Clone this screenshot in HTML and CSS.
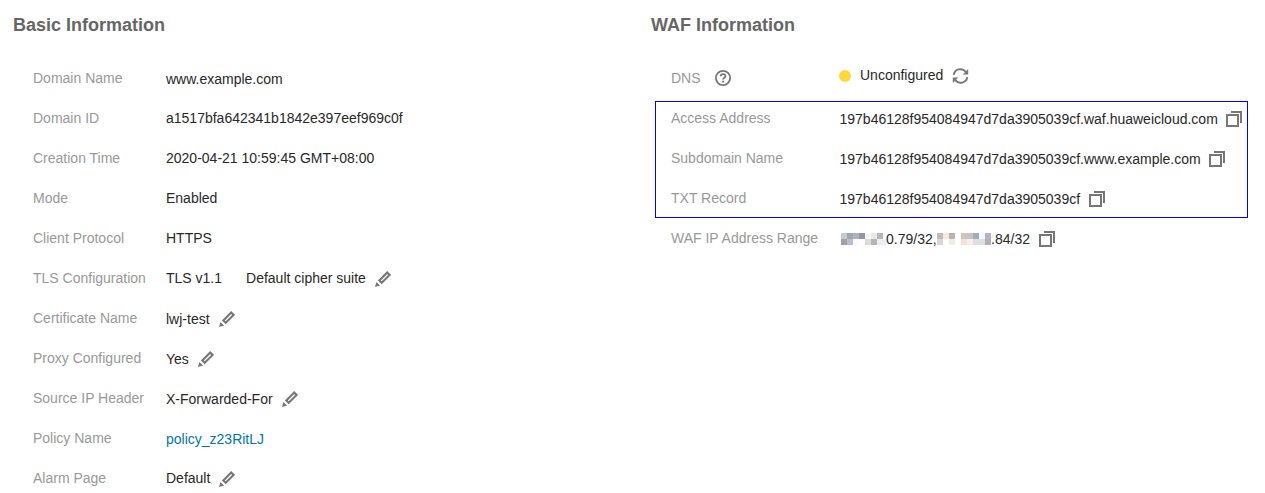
FILE: index.html
```html
<!DOCTYPE html>
<html lang="en">
<head>
<meta charset="utf-8">
<title>Domain Details</title>
<link rel="stylesheet" href="styles.css">
</head>
<body>
<svg class="defs" aria-hidden="true">
  <symbol id="pencil" viewBox="0 0 16 16"><path d="M4.3 9.4 12.2 1.5 14.6 3.9 6.7 11.8Z" fill="none" stroke="currentColor" stroke-width="2.1"/><path d="M1.4 10.9 5.1 14.6 0 16Z" fill="currentColor"/></symbol>
  <symbol id="copy" viewBox="0 0 16 16"><path d="M1 4h11v11H1ZM5 1h10v11" fill="none" stroke="currentColor" stroke-width="2"/></symbol>
</svg>
<main class="page">
  <section class="panel">
    <h2>Basic Information</h2>
    <dl class="list basic">
      <div class="row"><dt>Domain Name</dt><dd class="low">www.example.com</dd></div>
      <div class="row"><dt>Domain ID</dt><dd>a1517bfa642341b1842e397eef969c0f</dd></div>
      <div class="row"><dt>Creation Time</dt><dd>2020-04-21 10:59:45 GMT+08:00</dd></div>
      <div class="row"><dt>Mode</dt><dd>Enabled</dd></div>
      <div class="row"><dt>Client Protocol</dt><dd>HTTPS</dd></div>
      <div class="row"><dt>TLS Configuration</dt><dd><span class="version">TLS v1.1</span>Default cipher suite<svg class="icon drop"><use href="#pencil"/></svg></dd></div>
      <div class="row"><dt>Certificate Name</dt><dd class="low">lwj-test<svg class="icon"><use href="#pencil"/></svg></dd></div>
      <div class="row"><dt>Proxy Configured</dt><dd class="low">Yes<svg class="icon"><use href="#pencil"/></svg></dd></div>
      <div class="row"><dt>Source IP Header</dt><dd class="low">X-Forwarded-For<svg class="icon"><use href="#pencil"/></svg></dd></div>
      <div class="row"><dt>Policy Name</dt><dd class="low"><a class="link">policy_z23RitLJ</a></dd></div>
      <div class="row"><dt>Alarm Page</dt><dd>Default<svg class="icon drop"><use href="#pencil"/></svg></dd></div>
    </dl>
  </section>
  <section class="panel">
    <h2>WAF Information</h2>
    <dl class="list waf">
      <div class="row"><dt>DNS<svg class="help" viewBox="0 0 16 16"><circle cx="8" cy="8" r="7.1" fill="none" stroke="currentColor" stroke-width="1.8"/><path d="M5.7 6.3c0-3 4.7-3 4.7-.1 0 1.6-2.3 1.6-2.3 3.4M8.1 10.7v1.8" fill="none" stroke="currentColor" stroke-width="1.8"/></svg></dt><dd class="high"><span class="dot"></span>Unconfigured<svg class="icon refresh" viewBox="0 0 17 16"><path d="M1.7 6.8C2.7 1 10-.8 13.8 3.8M15.3 9.2C14.3 15 7 16.8 3.2 12.2" fill="none" stroke="currentColor" stroke-width="2"/><path d="M16.2 1v5.5h-5.5ZM.8 15V9.5h5.5Z" fill="currentColor"/></svg></dd></div>
      <div class="boxed">
        <div class="row"><dt>Access Address</dt><dd class="low">197b46128f954084947d7da3905039cf.waf.huaweicloud.com<svg class="icon"><use href="#copy"/></svg></dd></div>
        <div class="row"><dt>Subdomain Name</dt><dd class="low">197b46128f954084947d7da3905039cf.www.example.com<svg class="icon"><use href="#copy"/></svg></dd></div>
        <div class="row"><dt>TXT Record</dt><dd class="low">197b46128f954084947d7da3905039cf<svg class="icon"><use href="#copy"/></svg></dd></div>
      </div>
      <div class="row"><dt>WAF IP Address Range</dt><dd class="low">
        <svg class="mask first" viewBox="0 0 45 12" shape-rendering="crispEdges"><path fill="#c3cfcf" d="M0 0h6v6H0z"/><path fill="#9fa8af" d="M6 0h6v6H6z"/><path fill="#afb2bc" d="M12 0h6v6h-6z"/><path fill="#9296a7" d="M18 0h6v6h-6z"/><path fill="#f5fdfd" d="M24 0h6v6h-6z"/><path fill="#f0e5e2" d="M30 0h6v6h-6z"/><path fill="#b5b6be" d="M36 0h6v6h-6z"/><path fill="#a1a1a5" d="M0 6h6v6H0z"/><path fill="#b3bfd8" d="M6 6h6v6H6z"/><path fill="#fffaf3" d="M12 6h6v6h-6z"/><path fill="#dbdcdc" d="M24 6h6v6h-6z"/><path fill="#bab2b5" d="M30 6h6v6h-6z"/><path fill="#e4f1f7" d="M36 6h9v6h-9z"/></svg>0.79/32,<svg class="mask second" viewBox="0 0 54 12" shape-rendering="crispEdges"><path fill="#bdbbb8" d="M0 0h6v6H0z"/><path fill="#faead0" d="M6 0h6v6H6z"/><path fill="#bbb1b7" d="M12 0h6v6h-6z"/><path fill="#d2c2be" d="M24 0h6v6h-6z"/><path fill="#cac3bf" d="M30 0h6v6h-6z"/><path fill="#a3adb9" d="M36 0h6v6h-6z"/><path fill="#f4fdfd" d="M42 0h6v6h-6z"/><path fill="#b8b1cf" d="M48 0h6v6h-6z"/><path fill="#e1d6d6" d="M0 6h6v6H0z"/><path fill="#f0ede3" d="M12 6h6v6h-6z"/><path fill="#f4e2d7" d="M24 6h6v6h-6z"/><path fill="#faefe4" d="M30 6h6v6h-6z"/><path fill="#dedfe6" d="M36 6h12v6H36z"/><path fill="#b7afb6" d="M48 6h6v6h-6z"/></svg>.84/32<svg class="icon"><use href="#copy"/></svg></dd></div>
    </dl>
  </section>
</main>
</body>
</html>
```

FILE: styles.css
```css
body { margin: 0; background: #fff; color: #282828; font: 14px/20px "Liberation Sans", Arial, sans-serif; overflow: hidden; }
.defs { display: none; }
.page { display: grid; grid-template-columns: 638px 1fr; height: 493px; padding-left: 13px; box-sizing: border-box; overflow: hidden; }
h2 { margin: 13px 0 0; font-size: 18px; line-height: 24px; color: #666; }
.list { margin: 21px 0 0; }
.row { display: grid; grid-template-columns: 133px 1fr; height: 40px; align-items: center; padding-left: 20px; white-space: nowrap; }
.waf .row { grid-template-columns: 168px 1fr; }
dt { display: flex; align-items: center; color: #999; }
dd { display: flex; align-items: center; margin: 0; }
.low { padding-top: 2px; }
.high { padding-bottom: 6px; }
.version { margin-right: 24px; }
.icon { flex: none; width: 16px; height: 16px; margin-left: 8.5px; color: #777; }
.basic .icon { margin-left: 9px; }
.drop { margin-top: 2px; }
.help { width: 16px; height: 16px; margin-left: 14px; color: #777; }
.refresh { width: 17px; margin-top: 1px; }
.dot { width: 12px; height: 12px; margin: 1px 9px 0 0; border-radius: 50%; background: #ffd73b; }
.boxed { width: 591px; margin: 3px 0 0 4px; height: 115px; border: 1px solid #00f; }
.boxed .row { padding-left: 15px; position: relative; top: -4px; }
.boxed dd { padding-left: .5px; }
.link { color: #0078a5; }
.mask { flex: none; height: 12px; }
.first { width: 45px; margin-left: 2px; }
.second { width: 54px; margin: 0 .5px 0 0; }
```
